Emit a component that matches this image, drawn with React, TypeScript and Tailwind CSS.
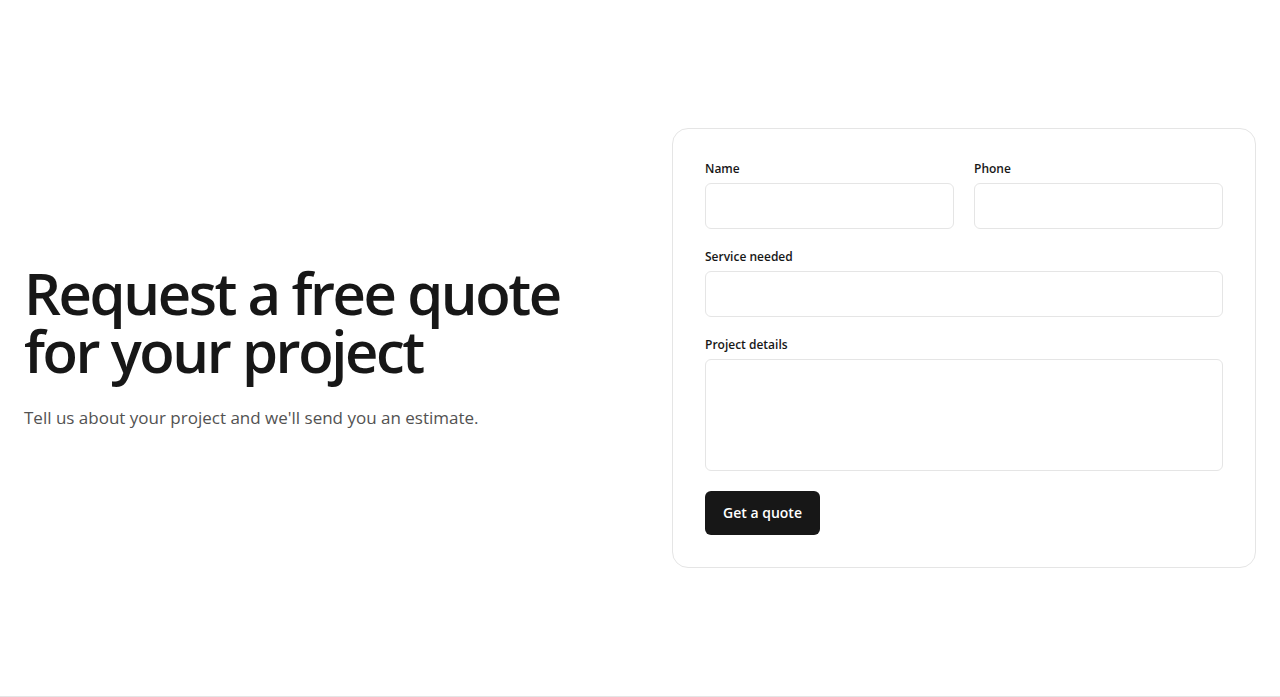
import { useState } from 'react';

const Field = ({ label, children }: { label: string; children: React.ReactNode }) => (
  <label className="flex flex-col gap-1.5">
    <span className="text-xs leading-4 font-semibold text-neutral-900">{label}</span>
    {children}
  </label>
);

const inputCls =
  'h-[46px] w-full rounded-md border border-neutral-200 bg-white px-3 text-sm text-neutral-900 outline-none focus:border-neutral-400';

export default function App() {
  const [form, setForm] = useState({ name: '', phone: '', service: '', details: '' });

  const update = (key: keyof typeof form) => (e: React.ChangeEvent<HTMLInputElement | HTMLTextAreaElement>) =>
    setForm(prev => ({ ...prev, [key]: e.target.value }));

  return (
    <div className="min-h-screen bg-white font-['Open_Sans',sans-serif] text-neutral-900">
      <section className="grid grid-cols-2 items-center gap-16 border-b border-neutral-200 px-6 py-32">
        {/* Left copy */}
        <div>
          <h1 className="text-[58px] leading-[58px] font-semibold tracking-[-0.042em] text-neutral-900">
            Request a free quote
            <br />
            for your project
          </h1>
          <p className="mt-6 text-[17px] leading-7 text-neutral-600">
            Tell us about your project and we'll send you an estimate.
          </p>
        </div>

        {/* Form card */}
        <form
          className="flex flex-col gap-5 rounded-2xl border border-neutral-200 bg-white p-8"
          onSubmit={e => e.preventDefault()}
        >
          <div className="grid grid-cols-2 gap-5">
            <Field label="Name">
              <input className={inputCls} value={form.name} onChange={update('name')} />
            </Field>
            <Field label="Phone">
              <input className={inputCls} value={form.phone} onChange={update('phone')} />
            </Field>
          </div>
          <Field label="Service needed">
            <input className={inputCls} value={form.service} onChange={update('service')} />
          </Field>
          <Field label="Project details">
            <textarea
              className="h-[112px] w-full resize-none rounded-md border border-neutral-200 bg-white px-3 py-2 text-sm outline-none focus:border-neutral-400"
              value={form.details}
              onChange={update('details')}
            />
          </Field>
          <div>
            <button
              type="submit"
              className="h-11 w-[115px] rounded-md bg-neutral-900 text-sm font-semibold text-white"
            >
              Get a quote
            </button>
          </div>
        </form>
      </section>
    </div>
  );
}
